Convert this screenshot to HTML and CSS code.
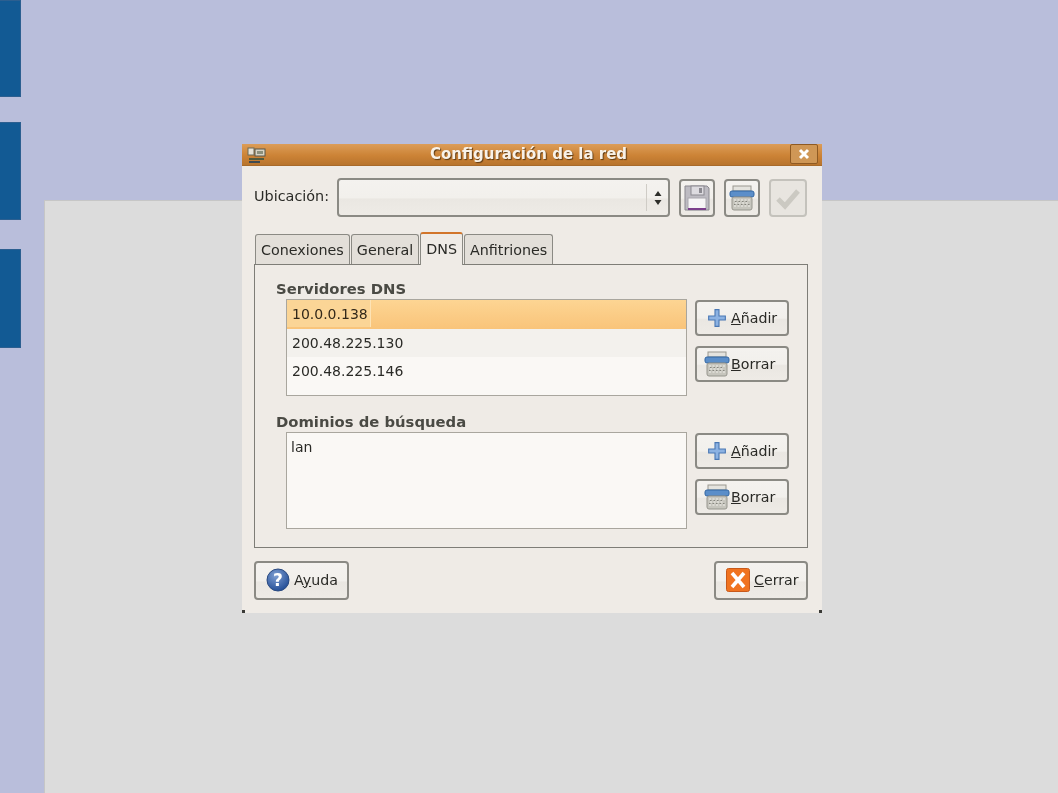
FILE: index.html
```html
<!DOCTYPE html>
<html>

<head>
    <meta charset="utf-8">
    <title>Configuración de la red</title>
    <link rel="stylesheet" href="styles.css">
</head>

<body>
    <div class="stage">
        <div class="side-tabs">
            <div class="side-tab first"></div>
            <div class="side-tab second"></div>
            <div class="side-tab third"></div>
        </div>
        <div class="sheet"></div>

        <div class="window">
            <div class="titlebar">
                <svg class="title-icon" width="20" height="18" viewBox="0 0 20 18">
                    <rect x="1" y="2" width="6" height="7" fill="#e6e2d6" stroke="#6b6a58"/>
                    <rect x="8" y="3" width="10" height="7" fill="#d8d4c4" stroke="#57574a"/>
                    <rect x="10" y="5" width="6" height="3" fill="#8a8f7c"/>
                    <rect x="2" y="12" width="15" height="2" fill="#4f5a3e"/>
                    <rect x="2" y="15" width="11" height="2" fill="#3f4a50"/>
                </svg>
                <span class="title-text">Configuración de la red</span>
                <span class="close-btn">
                    <svg width="12" height="12" viewBox="0 0 12 12">
                        <path d="M2 2 L10 10 M10 2 L2 10" stroke="#fff" stroke-width="3"/>
                    </svg>
                </span>
            </div>

            <div class="window-body">
                <div class="location-row">
                    <span class="location-label">Ubicación:</span>
                    <div class="combo">
                        <div class="combo-field"></div>
                        <div class="combo-arrows">
                            <svg width="8" height="16" viewBox="0 0 8 16">
                                <path d="M4 1 L7.5 6 L.5 6 Z M4 15 L.5 10 L7.5 10 Z" fill="#2e2e2a"/>
                            </svg>
                        </div>
                    </div>
                    <button class="btn icon-btn">
                        <svg width="28" height="28" viewBox="0 0 28 28">
                            <path d="M2 2 H24 L26 4 V26 H2 Z" fill="#bdbbc2" stroke="#8b8990"/>
                            <rect x="8" y="2" width="13" height="9" fill="#dddbe0" stroke="#8b8990"/>
                            <rect x="16" y="4" width="3" height="5" fill="#8b8990"/>
                            <rect x="5" y="14" width="18" height="12" fill="#f6f5f6" stroke="#a9a7ad"/>
                            <rect x="5" y="24" width="18" height="2" fill="#7b3f8c"/>
                        </svg>
                    </button>
                    <button class="btn icon-btn">
                        <svg width="26" height="26" viewBox="0 0 26 26">
                            <use href="#shredder"/>
                        </svg>
                    </button>
                    <button class="btn icon-btn apply" disabled>
                        <svg width="26" height="24" viewBox="0 0 26 24">
                            <path d="M3 13 L10 20 L23 5" fill="none" stroke="#cbc9c2" stroke-width="5"/>
                        </svg>
                    </button>
                </div>

                <div class="tabs">
                    <div class="tab">Conexiones</div>
                    <div class="tab">General</div>
                    <div class="tab active">DNS</div>
                    <div class="tab">Anfitriones</div>
                </div>

                <div class="notebook">
                    <div class="section">
                        <div class="section-title">Servidores DNS</div>
                        <div class="section-row">
                            <div class="list">
                                <div class="list-row selected"><span class="cell-focus">10.0.0.138</span></div>
                                <div class="list-row odd">200.48.225.130</div>
                                <div class="list-row">200.48.225.146</div>
                            </div>
                            <div class="side-buttons">
                                <button class="btn side-btn add">
                                    <svg width="20" height="20" viewBox="0 0 18 18"><use href="#plus"/></svg>
                                    <span><u>A</u>ñadir</span>
                                </button>
                                <button class="btn side-btn del">
                                    <svg width="26" height="26" viewBox="0 0 26 26"><use href="#shredder"/></svg>
                                    <span><u>B</u>orrar</span>
                                </button>
                            </div>
                        </div>
                    </div>
                    <div class="section">
                        <div class="section-title">Dominios de búsqueda</div>
                        <div class="section-row">
                            <div class="list">
                                <div class="list-row plain">lan</div>
                            </div>
                            <div class="side-buttons">
                                <button class="btn side-btn add">
                                    <svg width="20" height="20" viewBox="0 0 18 18"><use href="#plus"/></svg>
                                    <span><u>A</u>ñadir</span>
                                </button>
                                <button class="btn side-btn del">
                                    <svg width="26" height="26" viewBox="0 0 26 26"><use href="#shredder"/></svg>
                                    <span><u>B</u>orrar</span>
                                </button>
                            </div>
                        </div>
                    </div>
                </div>

                <div class="actions">
                    <button class="btn action-btn help">
                        <svg width="24" height="24" viewBox="0 0 24 24">
                            <defs>
                                <radialGradient id="helpBall" cx="40%" cy="30%" r="75%">
                                    <stop offset="0" stop-color="#7f9fd2"/>
                                    <stop offset="1" stop-color="#1f4a94"/>
                                </radialGradient>
                            </defs>
                            <circle cx="12" cy="12" r="11" fill="url(#helpBall)" stroke="#2a4a80"/>
                            <text x="12" y="18" class="help-mark" text-anchor="middle">?</text>
                        </svg>
                        <span>A<u>y</u>uda</span>
                    </button>
                    <button class="btn action-btn close">
                        <svg width="24" height="24" viewBox="0 0 24 24">
                            <rect x=".5" y=".5" width="23" height="23" rx="2" fill="#f07320" stroke="#c8591a"/>
                            <path d="M6 5 L18 19 M18 5 L6 19" stroke="#fff" stroke-width="3.6"/>
                        </svg>
                        <span><u>C</u>errar</span>
                    </button>
                </div>
            </div>
        </div>
    </div>

    <svg width="0" height="0" class="defs">
        <defs>
            <symbol id="plus" viewBox="0 0 18 18">
                <path d="M7.2 1.5 H10.8 V7.2 H16.5 V10.8 H10.8 V16.5 H7.2 V10.8 H1.5 V7.2 H7.2 Z" fill="#8cb2e2" stroke="#4a78b4"/>
            </symbol>
            <symbol id="shredder" viewBox="0 0 26 26">
                <rect x="4" y="1" width="18" height="5" fill="#e4e3de" stroke="#99988f"/>
                <rect x="1" y="6" width="24" height="6" rx="2" fill="#5b8ec9" stroke="#3266a3"/>
                <rect x="3" y="12" width="20" height="13" rx="2" fill="#c6c5bd" stroke="#97968e"/>
                <path d="M5 15 H21 M6 18 H20 M5 21 H21" stroke="#f0efea" stroke-dasharray="2 1.5"/>
                <path d="M6 16.5 H20 M5 19.5 H21" stroke="#85847d" stroke-dasharray="1.5 2"/>
            </symbol>
        </defs>
    </svg>
</body>

</html>
```
FILE: styles.css
```css
html, body {
    margin: 0;
    height: 100%;
    overflow: hidden;
}

body {
    font-family: "DejaVu Sans", sans-serif;
    font-size: 14px;
    color: #2a2a26;
    background: #b9bedb;
}

.defs {
    position: absolute;
}

.stage {
    position: relative;
    display: flex;
    height: 793px;
}

.side-tabs {
    display: flex;
    flex-direction: column;
    width: 21px;
    flex: none;
}

.side-tab {
    background: #125a94;
    border: 1px solid #2c5f90;
    border-left: none;
    box-sizing: border-box;
}

.side-tab.first {
    height: 97px;
}

.side-tab.second {
    height: 98px;
    margin-top: 25px;
}

.side-tab.third {
    height: 99px;
    margin-top: 29px;
}

.sheet {
    flex: 1;
    margin: 200px 0 0 23px;
    background: #dcdcdc;
    border-top: 1px solid #c6c6c6;
    border-left: 1px solid #c6c6c6;
}

.window {
    position: absolute;
    left: 242px;
    top: 144px;
    width: 580px;
    height: 469px;
    background: #efebe6;
    box-sizing: border-box;
    filter: blur(0.45px);
}

.window::before,
.window::after {
    content: "";
    position: absolute;
    bottom: 0;
    width: 3px;
    height: 3px;
    background: #3a3a36;
}

.window::before {
    left: 0;
}

.window::after {
    right: 0;
}

.titlebar {
    display: flex;
    align-items: center;
    height: 22px;
    padding: 0 4px 0 5px;
    background: linear-gradient(#dc9d58, #cc8336 55%, #b8742d);
    border-bottom: 1px solid #a86a2a;
    box-sizing: border-box;
}

.title-icon {
    flex: none;
}

.title-text {
    flex: 1;
    text-align: center;
    font-weight: bold;
    font-size: 15px;
    line-height: 18px;
    margin-top: -2px;
    color: #f8f2e8;
    text-shadow: 1px 1px 1px #5d3a12;
    padding-left: 0;
}

.close-btn {
    display: flex;
    align-items: center;
    justify-content: center;
    width: 28px;
    height: 20px;
    margin-top: -1px;
    border: 1px solid #8f5a22;
    border-radius: 2px;
    background: #cf9756;
    box-sizing: border-box;
}

.window-body {
    padding: 12px 14px 0 12px;
}

.btn {
    font: inherit;
    color: inherit;
    display: flex;
    align-items: center;
    padding: 0;
    background: linear-gradient(#f4f2ef 0, #f2f0ec 50%, #eae7e2 55%, #eeebe6 100%);
    border: 2px solid #8b8a84;
    border-radius: 4px;
    box-sizing: border-box;
}

.location-row {
    display: flex;
    align-items: center;
    height: 39px;
}

.location-label {
    width: 83px;
    flex: none;
    font-size: 14.4px;
    margin-top: -3px;
}

.combo {
    display: flex;
    width: 333px;
    height: 39px;
    flex: none;
    background: linear-gradient(#f4f2ef 0, #f2f0ec 50%, #eae7e2 55%, #eeebe6 100%);
    border: 2px solid #8b8a84;
    border-radius: 4px;
    box-sizing: border-box;
    margin-right: 9px;
}

.combo-field {
    flex: 1;
}

.combo-arrows {
    display: flex;
    align-items: center;
    justify-content: center;
    width: 21px;
    margin: 4px 0;
    border-left: 1px solid #cfccc6;
}

.icon-btn {
    justify-content: center;
    width: 36px;
    height: 38px;
    margin-right: 9px;
}

.apply {
    width: 38px;
    margin-right: 0;
    border-color: #c4c2bc;
    background: #e8e5e0;
}

.tabs {
    display: flex;
    align-items: flex-end;
    height: 32px;
    margin: 15px 0 0 1px;
    font-size: 14.3px;
}

.tab {
    height: 30px;
    line-height: 30px;
    padding: 0 5px;
    margin-right: 1px;
    background: #e3dfd9;
    border: 1px solid #8b8a84;
    border-bottom: none;
    border-radius: 3px 3px 0 0;
    box-sizing: border-box;
}

.tab.active {
    height: 33px;
    margin-bottom: -1px;
    line-height: 30px;
    background: #efebe6;
    border-top: 2px solid #d2752a;
    position: relative;
}

.notebook {
    height: 284px;
    padding: 15px 18px 0 21px;
    border: 1px solid #7e7d77;
    box-sizing: border-box;
}

.section {
    height: 133px;
}

.section-title {
    font-weight: bold;
    font-size: 14.8px;
    color: #4a4a44;
    height: 19px;
    line-height: 18px;
}

.section-row {
    display: flex;
    margin-left: 10px;
}

.list {
    width: 402px;
    height: 97px;
    margin-right: 8px;
    background: #faf8f5;
    border: 1px solid #a9a69e;
    box-sizing: border-box;
}

.list-row {
    height: 28.5px;
    line-height: 28px;
    padding-left: 5px;
}

.list-row.selected {
    padding-left: 0;
    background: linear-gradient(#fdd593, #f9c47a);
    color: #33291a;
}

.cell-focus {
    display: inline-block;
    height: 27px;
    padding: 0 1px 0 5px;
    width: 77px;
    background: #fbd596;
    border-right: 1px solid #fde3b5;
}

.list-row.odd {
    background: #f3f1ed;
}

.list-row.plain {
    height: 26px;
    line-height: 28px;
    padding-left: 4px;
}

.side-buttons {
    display: flex;
    flex-direction: column;
    gap: 10px;
    padding-top: 1px;
}

.side-btn {
    width: 94px;
    height: 36px;
    font-size: 14.2px;
}

.side-btn.add {
    padding-left: 10px;
    gap: 4px;
}

.side-btn.del {
    padding-left: 7px;
    gap: 1px;
}

.actions {
    display: flex;
    justify-content: space-between;
    margin-top: 13px;
}

.action-btn {
    width: 95px;
    height: 39px;
    gap: 4px;
    padding: 0 0 2px 10px;
    font-size: 14.2px;
}

.action-btn.close {
    width: 94px;
}

.help-mark {
    font-family: "DejaVu Sans", sans-serif;
    font-weight: bold;
    font-size: 17px;
    fill: #fff;
}
```
